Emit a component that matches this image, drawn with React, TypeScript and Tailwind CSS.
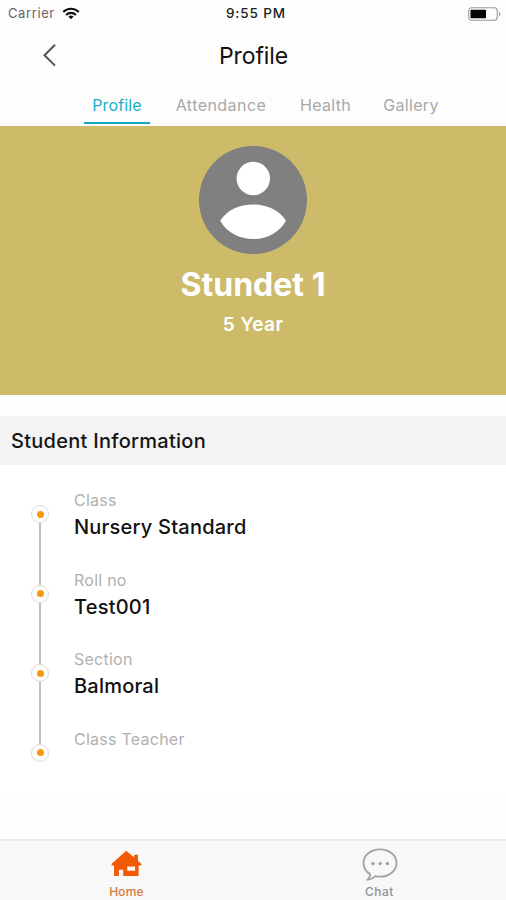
import React from "react";

interface InfoItem {
  label: string;
  value?: string;
}

const tabs = [
  { label: "Profile", width: "w-[66px]", tracking: "tracking-[0.15px]" },
  { label: "Attendance", width: "w-[107px]", tracking: "tracking-[0.45px]" },
  { label: "Health", width: "w-[67px]", tracking: "tracking-[0.3px]" },
  { label: "Gallery", width: "w-[69px]", tracking: "tracking-[0.3px]" },
];

const items: InfoItem[] = [
  { label: "Class", value: "Nursery Standard" },
  { label: "Roll no", value: "Test001" },
  { label: "Section", value: "Balmoral" },
  { label: "Class Teacher" },
];

function WifiIcon() {
  return (
    <svg width="18" height="13" viewBox="0 0 18 13" fill="none" stroke="#111" strokeWidth="2.1" aria-hidden="true">
      <path d="M1.2 4.9C5.6.6 12.4.6 16.8 4.9" />
      <path d="M4.1 7.9C6.9 5.2 11.1 5.2 13.9 7.9" />
      <path d="M9 12.2 6.4 9.6C7.9 8.2 10.1 8.2 11.6 9.6Z" fill="#111" stroke="none" />
    </svg>
  );
}

function BatteryIcon() {
  return (
    <svg width="33" height="14" viewBox="0 0 33 14" fill="none" aria-hidden="true">
      <rect x=".7" y=".7" width="28.6" height="12.6" rx="3" stroke="#999" strokeWidth="1.1" />
      <rect x="2.5" y="2.7" width="15.5" height="8.6" rx=".8" fill="#050505" />
      <path d="M31 4.7c1.7.7 1.7 3.9 0 4.6z" fill="#999" />
    </svg>
  );
}

function Avatar() {
  return (
    <svg className="block" width="108" height="108" viewBox="0 0 108 108" aria-hidden="true">
      <circle cx="54" cy="54" r="54" fill="#808080" />
      <circle cx="54.3" cy="32.5" r="16.7" fill="#fff" />
      <path d="M21.2 74.7C28 63.8 40.5 58.4 54.2 58.4S80.2 63.8 87 74.7C80.2 86.6 68 93 54.2 93S28 86.6 21.2 74.7Z" fill="#fff" />
    </svg>
  );
}

function HomeIcon() {
  return (
    <svg width="31" height="27" viewBox="0 0 31 27" fill="#f25a05" aria-hidden="true">
      <path
        fillRule="evenodd"
        d="M15.3.8 23.2 7.6V4.8h3.8v6.2L30.2 13.8V15.4H27.6V26H12.2V19.8H7.9V26H3V15.4H.6V13.8ZM16.3 16.6V20.8H24.1V16.6Z"
      />
    </svg>
  );
}

function ChatIcon() {
  return (
    <svg width="36" height="34" viewBox="0 0 36 34" fill="none" aria-hidden="true">
      <path
        d="M18 1.3C27.3 1.3 34.5 7.4 34.5 15S27.3 28.7 18 28.7c-1.7 0-3.2-.2-4.7-.6-2.1 2-4.7 3.4-8 3.8 1.7-1.9 2.8-3.6 3-5.6C4 23.8 1.5 19.7 1.5 15 1.5 7.4 8.7 1.3 18 1.3Z"
        stroke="#a2a2a2"
        strokeWidth="1.8"
        strokeLinejoin="round"
      />
      <g fill="#999">
        <circle cx="11" cy="15.6" r="1.6" />
        <circle cx="18.2" cy="15.6" r="1.6" />
        <circle cx="25.4" cy="15.6" r="1.6" />
      </g>
    </svg>
  );
}

function TimelineItem({ item, last }: { item: InfoItem; last: boolean }) {
  return (
    <li className="flex h-[79.6px]">
      <div className="flex w-[18px] shrink-0 flex-col items-center pt-[15px]">
        <span className="flex h-[18px] w-[18px] shrink-0 items-center justify-center rounded-full border-[1.5px] border-[#dadada] bg-white">
          <span className="h-[7px] w-[7px] rounded-full bg-[#f59812]" />
        </span>
        {!last && <span className="-mb-[15px] w-[2px] flex-1 bg-[#c2c2c2]" />}
      </div>
      <div className="ml-[25px]">
        <p className="text-[16px] leading-[20px] tracking-[0.25px] text-[#b0b0b0]">{item.label}</p>
        {item.value && (
          <p className="mt-[5px] text-[20px] leading-[24px] font-medium tracking-[0.22px] text-[#111]">{item.value}</p>
        )}
      </div>
    </li>
  );
}

export default function App() {
  return (
    <div className="flex h-[900px] w-[506px] flex-col overflow-hidden bg-[#fdfdfd] font-['Inter','Liberation_Sans',sans-serif]">
      <div className="grid h-[27px] shrink-0 grid-cols-3 items-center pr-[5px] pl-[8px] text-[13px]">
        <div className="flex items-center gap-[7px] text-[#666]">
          <span className="tracking-[0.6px]">Carrier</span>
          <WifiIcon />
        </div>
        <span className="pl-[3px] text-center text-[13.5px] font-medium tracking-[0.9px] whitespace-nowrap text-[#222]">
          9:55 PM
        </span>
        <div className="flex justify-end">
          <BatteryIcon />
        </div>
      </div>

      <header className="grid h-[58px] shrink-0 grid-cols-[80px_1fr_80px] items-center">
        <button className="-mt-[2px] ml-[42px] flex w-[15px]" aria-label="Back">
          <svg width="15" height="24" viewBox="0 0 15 24" fill="none" stroke="#555" strokeWidth="2" aria-hidden="true">
            <path d="M13 1.8 2.5 12.2 13 22.6" />
          </svg>
        </button>
        <h1 className="pl-px text-center text-[23px] leading-[28px] tracking-[-0.1px] text-[#111]">Profile</h1>
      </header>

      <nav className="flex h-[41px] shrink-0 gap-[17.5px] pl-[84px]">
        {tabs.map((tab, i) => (
          <button
            key={tab.label}
            className={`h-[39px] border-b-[2px] pt-[2px] text-center text-[16px] whitespace-nowrap ${tab.width} ${tab.tracking} ${
              i === 0 ? "border-[#18a5c3] text-[#20afc9]" : "border-transparent text-[#a8a8a8]"
            }`}
          >
            {tab.label}
          </button>
        ))}
      </nav>

      <section className="flex h-[269px] shrink-0 flex-col items-center bg-[#cdbb69] pt-[20px] text-white">
        <Avatar />
        <h2 className="mt-[11px] text-[32px] leading-[40px] font-bold">Stundet 1</h2>
        <p className="mt-[8px] text-[19px] leading-[24px] font-semibold tracking-[0.4px]">5 Year</p>
      </section>

      <h3 className="mt-[21px] flex h-[49px] shrink-0 items-center bg-[#f3f3f3] pt-px pl-[11px] text-[20px] font-medium tracking-[0.28px] text-[#151515]">
        Student Information
      </h3>
      <ul className="h-[328px] shrink-0 bg-white pt-[25px] pl-[31px]">
        {items.map((item, i) => (
          <TimelineItem key={item.label} item={item} last={i === items.length - 1} />
        ))}
      </ul>

      <nav className="mt-auto grid h-[61px] shrink-0 grid-cols-2 border-t-[2px] border-[#e9e9e9] bg-[#f8f8f8]">
        <button className="flex flex-col items-center pt-[9px] text-[#d67b3f]">
          <HomeIcon />
          <span className="mt-[8px] text-[12px] leading-[14px] font-medium tracking-[0.2px]">Home</span>
        </button>
        <button className="flex flex-col items-center pt-[7px] text-[#929292]">
          <ChatIcon />
          <span className="mt-[3px] text-[12px] leading-[14px] font-medium tracking-[0.5px]">Chat</span>
        </button>
      </nav>
    </div>
  );
}
